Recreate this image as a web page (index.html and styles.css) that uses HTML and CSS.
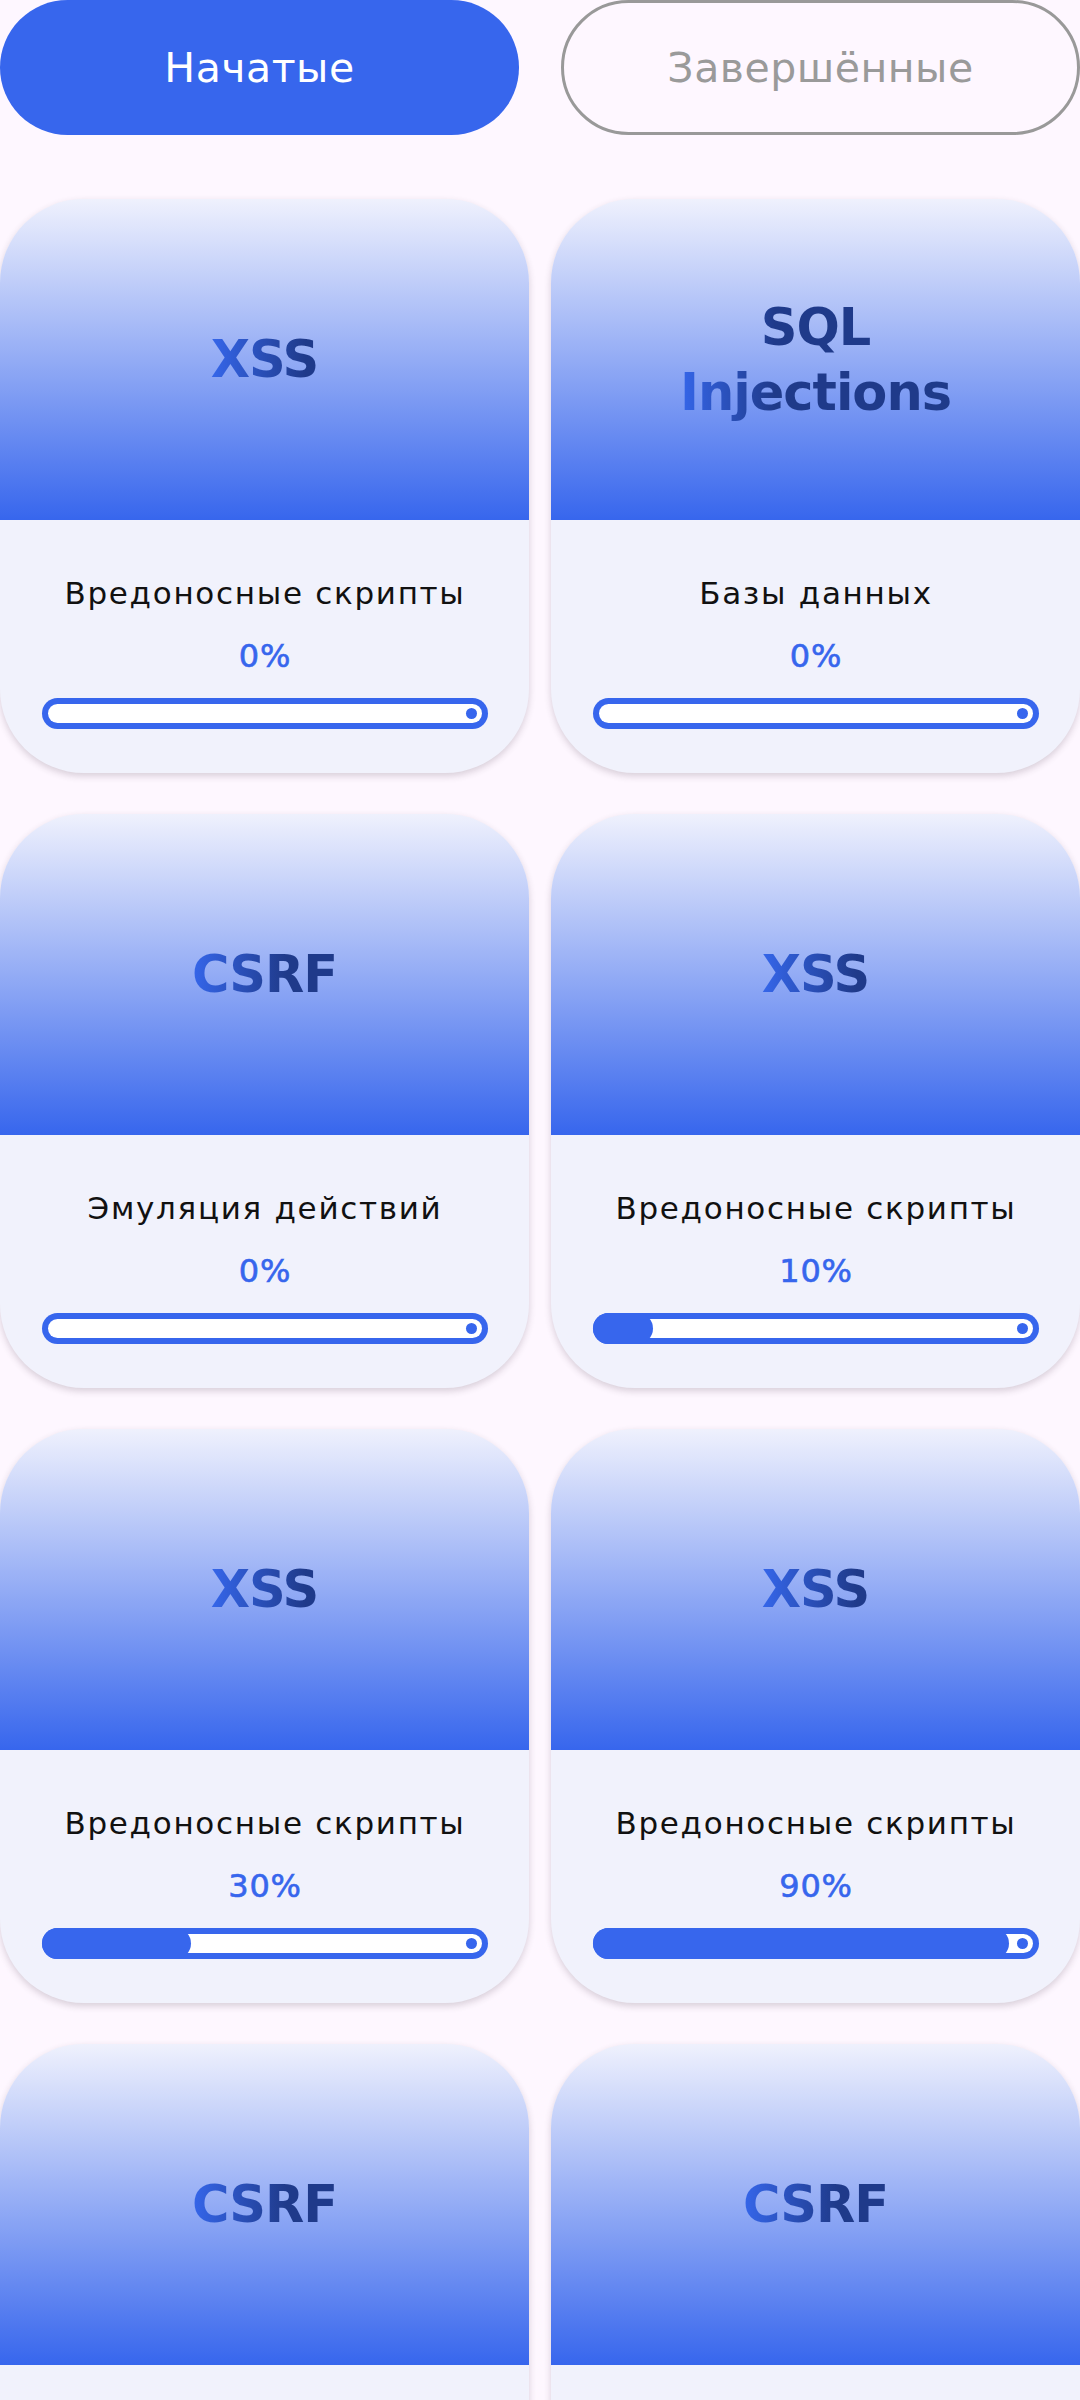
FILE: index.html
```html
<!DOCTYPE html>
<html lang="ru">
<head>
<meta charset="utf-8">
<title>Курсы</title>
<link rel="stylesheet" href="styles.css">
</head>
<body>
<div class="page">
  <div class="tabs">
    <button class="tab tab-active">Начатые</button>
    <button class="tab tab-idle">Завершённые</button>
  </div>

  <div class="grid">
    <div class="card">
      <div class="card-head"><span class="card-title">XSS</span></div>
      <div class="card-body">
        <div class="card-sub">Вредоносные скрипты</div>
        <div class="card-pct">0%</div>
        <div class="bar"><div class="bar-track"></div><span class="bar-dot"></span></div>
      </div>
    </div>
    <div class="card">
      <div class="card-head"><span class="card-title">SQL<br>Injections</span></div>
      <div class="card-body">
        <div class="card-sub">Базы данных</div>
        <div class="card-pct">0%</div>
        <div class="bar"><div class="bar-track"></div><span class="bar-dot"></span></div>
      </div>
    </div>

    <div class="card">
      <div class="card-head"><span class="card-title">CSRF</span></div>
      <div class="card-body">
        <div class="card-sub">Эмуляция действий</div>
        <div class="card-pct">0%</div>
        <div class="bar"><div class="bar-track"></div><span class="bar-dot"></span></div>
      </div>
    </div>
    <div class="card">
      <div class="card-head"><span class="card-title">XSS</span></div>
      <div class="card-body">
        <div class="card-sub">Вредоносные скрипты</div>
        <div class="card-pct">10%</div>
        <div class="bar"><div class="bar-track"></div><span class="bar-fill" style="width: calc(15px + 10%)"></span><span class="bar-dot"></span></div>
      </div>
    </div>

    <div class="card">
      <div class="card-head"><span class="card-title">XSS</span></div>
      <div class="card-body">
        <div class="card-sub">Вредоносные скрипты</div>
        <div class="card-pct">30%</div>
        <div class="bar"><div class="bar-track"></div><span class="bar-fill" style="width: calc(15px + 30%)"></span><span class="bar-dot"></span></div>
      </div>
    </div>
    <div class="card">
      <div class="card-head"><span class="card-title">XSS</span></div>
      <div class="card-body">
        <div class="card-sub">Вредоносные скрипты</div>
        <div class="card-pct">90%</div>
        <div class="bar"><div class="bar-track"></div><span class="bar-fill" style="width: calc(15px + 90%)"></span><span class="bar-dot"></span></div>
      </div>
    </div>

    <div class="card">
      <div class="card-head"><span class="card-title">CSRF</span></div>
      <div class="card-body"></div>
    </div>
    <div class="card">
      <div class="card-head"><span class="card-title">CSRF</span></div>
      <div class="card-body"></div>
    </div>
  </div>
</div>
</body>
</html>
```

FILE: styles.css
```css
* { box-sizing: border-box; }

html, body {
  margin: 0;
  padding: 0;
  background: #fef7ff;
}

body {
  font-family: "DejaVu Sans", "Liberation Sans", sans-serif;
  color: #111111;
}

.page {
  width: 1080px;
}

.tabs {
  display: flex;
  justify-content: space-between;
  height: 135px;
}

.tab {
  width: 519px;
  height: 135px;
  border-radius: 68px;
  font-family: "DejaVu Sans", "Liberation Sans", sans-serif;
  font-size: 41px;
  letter-spacing: 0.5px;
  padding: 0;
  margin: 0;
  cursor: pointer;
}

.tab-active {
  background: #3766ed;
  color: #ffffff;
  border: none;
}

.tab-idle {
  background: transparent;
  color: #9a9a9a;
  border: 3px solid #999999;
}

.grid {
  margin-top: 64px;
  display: grid;
  grid-template-columns: 529px 529px;
  column-gap: 22px;
  row-gap: 41px;
}

.card {
  border-radius: 84px;
  overflow: hidden;
  background: #f1f2fc;
  box-shadow: 0 3px 7px rgba(60, 40, 60, 0.2);
}

.card-head {
  height: 321px;
  display: flex;
  align-items: center;
  justify-content: center;
  background: linear-gradient(180deg, #eff1fd 0%, #3766ed 100%);
}

.card-title {
  display: inline-block;
  text-align: center;
  font-family: "DejaVu Sans", "Liberation Sans", sans-serif;
  font-weight: 700;
  font-size: 51px;
  line-height: 65px;
  letter-spacing: -1px;
  background: linear-gradient(90deg, #3566ea 0px, #1f3a8a 95px);
  -webkit-background-clip: text;
  background-clip: text;
  color: transparent;
}

.card-body {
  height: 253px;
  padding: 53px 41px 0 42px;
  display: flex;
  flex-direction: column;
  align-items: stretch;
}

.card-sub {
  font-size: 31px;
  line-height: 40px;
  letter-spacing: 1.7px;
  text-align: center;
  color: #111111;
}

.card-pct {
  margin-top: 23px;
  font-size: 32px;
  line-height: 40px;
  font-weight: 500;
  letter-spacing: 0.8px;
  text-align: center;
  color: #3766ed;
  -webkit-text-stroke: 0.6px #3766ed;
}

.bar {
  position: relative;
  margin-top: 22px;
  height: 31px;
  padding: 6px;
  border-radius: 16px;
  background: #3766ed;
}

.bar-track {
  height: 19px;
  border-radius: 10px;
  background: #ffffff;
}

.bar-fill {
  position: absolute;
  left: 0;
  top: 0;
  height: 31px;
  border-radius: 16px;
  background: #3766ed;
}

.bar-dot {
  position: absolute;
  right: 11px;
  top: 10px;
  width: 11px;
  height: 11px;
  border-radius: 50%;
  background: #3766ed;
}
```
